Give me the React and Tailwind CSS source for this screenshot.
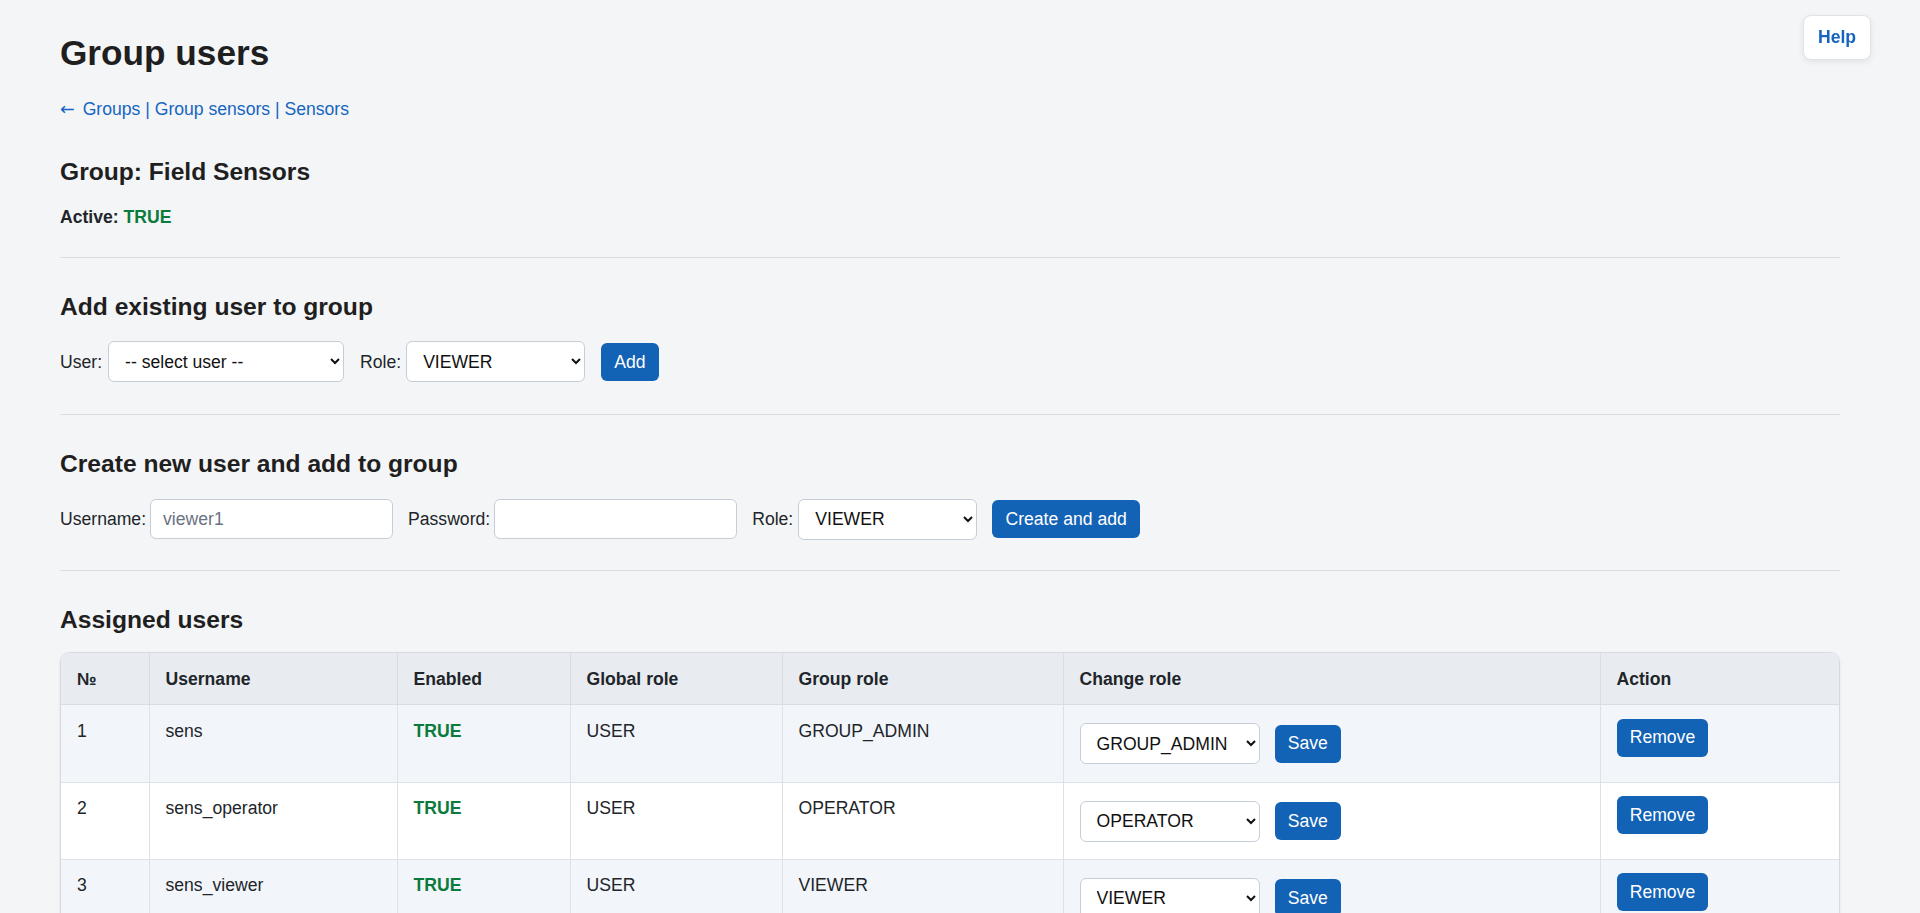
import React from "react";

const ROLES = ["GROUP_ADMIN", "OPERATOR", "VIEWER"];

const members = [
  { id: 1, username: "sens", enabled: true, globalRole: "USER", groupRole: "GROUP_ADMIN" },
  { id: 2, username: "sens_operator", enabled: true, globalRole: "USER", groupRole: "OPERATOR" },
  { id: 3, username: "sens_viewer", enabled: true, globalRole: "USER", groupRole: "VIEWER" },
];

const selectCls =
  "h-[41px] rounded-[6px] border border-[#c5cdd9] bg-white pl-[12px] pr-[6px] text-[17.6px] text-[#111]";
const inputCls =
  "h-[40px] w-[243px] rounded-[6px] border border-[#c5cdd9] bg-white px-[12px] text-[17.6px] text-[#111] placeholder:text-[#6b7280] outline-none";
const btnCls =
  "h-[38px] rounded-[6px] bg-[#1262b5] px-[13.2px] text-[17.6px] leading-[1.4] text-white";

function RoleSelect({ value, width = "w-[179px]" }) {
  return (
    <select defaultValue={value} className={`${selectCls} ${width}`}>
      {ROLES.map((r) => (
        <option key={r} value={r}>
          {r}
        </option>
      ))}
    </select>
  );
}

function Yes() {
  return <span className="font-bold text-[#0a7a3d]">TRUE</span>;
}

export default function App() {
  const head = ["№", "Username", "Enabled", "Global role", "Group role", "Change role", "Action"];
  const widths = ["w-[88px]", "w-[248px]", "w-[173px]", "w-[212px]", "w-[281px]", "w-[537px]", ""];

  return (
    <div className="min-h-screen bg-[#f4f5f7] font-['Liberation_Sans',Arial,sans-serif] text-[17.6px] leading-[1.4] text-[#212529]">
      {/* floating help */}
      <button className="fixed right-[49px] top-[15px] h-[45px] w-[68px] rounded-[8px] border border-[#dfe2e7] bg-white text-[17.6px] font-bold text-[#1565c0] shadow-[0_2px_6px_rgba(0,0,0,0.08)]">
        Help
      </button>

      <div className="ml-[60px] max-w-[1780px] pt-[32px] pb-[112px]">
        <h1 className="text-[35.2px] font-bold leading-[1.2] text-[#1f1f1f]">Group users</h1>

        <p className="mt-[23px] text-[#1565c0]">
          <a href="#">
            <span className="mr-[3px] font-['DejaVu_Sans',sans-serif]">←</span> Groups
          </a>{" "}
          | <a href="#">Group sensors</a> | <a href="#">Sensors</a>
        </p>

        <h2 className="mt-[35px] text-[24.6px] font-bold leading-[1.2] text-[#1f1f1f]">
          Group: Field Sensors
        </h2>
        <p className="mt-[19px] font-bold">
          Active: <Yes />
        </p>

        <hr className="mt-[27px] border-t border-[#dadee4]" />

        {/* add existing */}
        <h2 className="mt-[34px] text-[24.6px] font-bold leading-[1.2] text-[#1f1f1f]">
          Add existing user to group
        </h2>
        <form className="mt-[20px] flex items-center gap-[16px]" onSubmit={(e) => e.preventDefault()}>
          <label className="flex items-center gap-[6px]">
            User:
            <select defaultValue="" className={`${selectCls} w-[236px]`}>
              <option value="">-- select user --</option>
              <option>sens</option>
              <option>sens_operator</option>
              <option>sens_viewer</option>
            </select>
          </label>
          <label className="flex items-center gap-[5px]">
            Role:
            <RoleSelect value="VIEWER" />
          </label>
          <button className={btnCls}>Add</button>
        </form>

        <hr className="mt-[32px] border-t border-[#dadee4]" />

        {/* create new */}
        <h2 className="mt-[34px] text-[24.6px] font-bold leading-[1.2] text-[#1f1f1f]">
          Create new user and add to group
        </h2>
        <form className="mt-[20px] flex items-center gap-[15px]" onSubmit={(e) => e.preventDefault()}>
          <label className="flex items-center gap-[4px]">
            Username:
            <input className={inputCls} placeholder="viewer1" />
          </label>
          <label className="flex items-center gap-[4px]">
            Password:
            <input type="password" className={inputCls} />
          </label>
          <label className="flex items-center gap-[5px]">
            Role:
            <RoleSelect value="VIEWER" />
          </label>
          <button className={btnCls}>Create and add</button>
        </form>

        <hr className="mt-[30px] border-t border-[#dadee4]" />

        <h2 className="mt-[34px] text-[24.6px] font-bold leading-[1.2] text-[#1f1f1f]">Assigned users</h2>

        <div className="mt-[18px] overflow-hidden rounded-[10px] border border-[#d5dae2] bg-white shadow-[0_1px_3px_rgba(0,0,0,0.08)]">
          <table className="w-full table-fixed border-collapse text-left">
            <thead>
              <tr className="bg-[#e8ecf1]">
                {head.map((h, i) => (
                  <th
                    key={h}
                    className={`${widths[i]} border-b border-[#d8dde5] px-[16px] py-[13.2px] font-bold ${
                      i < head.length - 1 ? "border-r" : ""
                    }`}
                  >
                    {h}
                  </th>
                ))}
              </tr>
            </thead>
            <tbody>
              {members.map((m, idx) => {
                const last = idx === members.length - 1;
                const cell = `border-[#dde2e8] px-[16px] py-[13.2px] align-top ${last ? "" : "border-b"}`;
                return (
                  <tr key={m.id} className={idx % 2 === 0 ? "bg-[#f2f5fa]" : "bg-white"}>
                    <td className={`${cell} border-r`}>{m.id}</td>
                    <td className={`${cell} border-r`}>{m.username}</td>
                    <td className={`${cell} border-r`}>{m.enabled && <Yes />}</td>
                    <td className={`${cell} border-r`}>{m.globalRole}</td>
                    <td className={`${cell} border-r`}>{m.groupRole}</td>
                    <td className={`${cell} border-r`}>
                      <div className="my-[4.5px] flex items-center gap-[15px]">
                        <RoleSelect value={m.groupRole} width="w-[180px]" />
                        <button className={btnCls}>Save</button>
                      </div>
                    </td>
                    <td className={cell}>
                      <button className={btnCls}>Remove</button>
                    </td>
                  </tr>
                );
              })}
            </tbody>
          </table>
        </div>
      </div>
    </div>
  );
}
